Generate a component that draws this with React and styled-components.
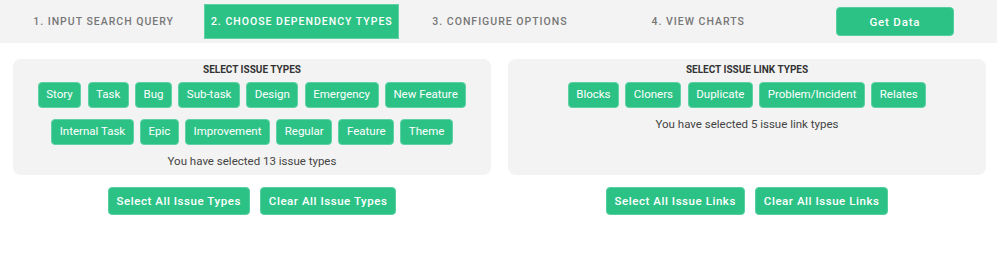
import React from "react";
import styled, { createGlobalStyle } from "styled-components";

const GREEN = "#2cc286";

const Global = createGlobalStyle`
  html, body { margin: 0; padding: 0; background: #fff; }
  body { font-family: Roboto, "Liberation Sans", Arial, sans-serif; }
  * { box-sizing: border-box; }
`;

const Nav = styled.nav`
  display: grid;
  grid-template-columns: repeat(5, 1fr);
  column-gap: 3px;
  align-items: center;
  height: 43px;
  padding: 0 3px 0 6px;
  background: #f3f3f3;
`;

const Tab = styled.div`
  display: flex;
  align-items: center;
  justify-content: center;
  height: 35px;
  font-size: 10.5px;
  font-weight: 500;
  letter-spacing: 1px;
  text-transform: uppercase;
  color: ${(p) => (p.$active ? "#fff" : "#777")};
  background: ${(p) => (p.$active ? GREEN : "transparent")};
  border: 1px solid ${(p) => (p.$active ? "#5fd1a5" : "transparent")};
`;

const NavCell = styled.div`
  display: flex;
  justify-content: center;
`;

const GetData = styled.button`
  width: 118px;
  height: 29px;
  border: 1px solid #55cf9f;
  border-radius: 4px;
  background: ${GREEN};
  color: #fff;
  font-family: inherit;
  font-size: 11.5px;
  font-weight: 500;
  letter-spacing: 0.8px;
  margin-left: -3px;
`;

const Main = styled.div`
  display: grid;
  grid-template-columns: 1fr 1fr;
  column-gap: 17px;
  padding: 16px 11px 0 13px;
`;

const Column = styled.div`
  display: flex;
  flex-direction: column;
`;

const Panel = styled.section`
  flex: 1;
  background: #f3f3f3;
  border-radius: 8px;
  padding: 4px 10px 5px;
  display: flex;
  flex-direction: column;
  align-items: center;
  min-height: 116px;
`;

const Title = styled.div`
  font-size: 10px;
  font-weight: 700;
  line-height: 14px;
  color: #333;
  text-transform: uppercase;
`;

const Chips = styled.div`
  display: flex;
  flex-wrap: wrap;
  justify-content: center;
  column-gap: 6.3px;
  row-gap: 11px;
  margin-top: 5px;
  max-width: ${(p) => p.$max || "none"};
`;

const Chip = styled.button`
  height: 26px;
  padding: 0 7.5px;
  border: 1px solid #5fd1a5;
  border-radius: 4px;
  background: ${GREEN};
  color: #fff;
  font-family: inherit;
  font-size: 11.5px;
  line-height: 1;
`;

const Summary = styled.div`
  margin-top: 7px;
  font-size: 11.5px;
  line-height: 18px;
  color: #444;
`;

const Actions = styled.div`
  display: flex;
  justify-content: center;
  gap: 10px;
  margin-top: 12px;
`;

const Action = styled.button`
  height: 28px;
  padding: 0 8px;
  border: 1px solid #55cf9f;
  border-radius: 4px;
  background: ${GREEN};
  color: #fff;
  font-family: inherit;
  font-size: 11.5px;
  font-weight: 500;
  letter-spacing: 0.55px;
`;

const issueTypes = [
  "Story", "Task", "Bug", "Sub-task", "Design", "Emergency", "New Feature",
  "Internal Task", "Epic", "Improvement", "Regular", "Feature", "Theme",
];
const linkTypes = ["Blocks", "Cloners", "Duplicate", "Problem/Incident", "Relates"];

export default function App() {
  return (
    <>
      <Global />
      <Nav>
        <Tab>1. Input Search Query</Tab>
        <Tab $active>2. Choose Dependency Types</Tab>
        <Tab>3. Configure Options</Tab>
        <Tab>4. View Charts</Tab>
        <NavCell>
          <GetData>Get Data</GetData>
        </NavCell>
      </Nav>
      <Main>
        <Column>
          <Panel>
            <Title>Select Issue Types</Title>
            <Chips $max="440px">
              {issueTypes.map((t) => (
                <Chip key={t}>{t}</Chip>
              ))}
            </Chips>
            <Summary>You have selected 13 issue types</Summary>
          </Panel>
          <Actions>
            <Action>Select All Issue Types</Action>
            <Action>Clear All Issue Types</Action>
          </Actions>
        </Column>
        <Column>
          <Panel>
            <Title>Select Issue Link Types</Title>
            <Chips>
              {linkTypes.map((t) => (
                <Chip key={t}>{t}</Chip>
              ))}
            </Chips>
            <Summary>You have selected 5 issue link types</Summary>
          </Panel>
          <Actions>
            <Action>Select All Issue Links</Action>
            <Action>Clear All Issue Links</Action>
          </Actions>
        </Column>
      </Main>
    </>
  );
}
